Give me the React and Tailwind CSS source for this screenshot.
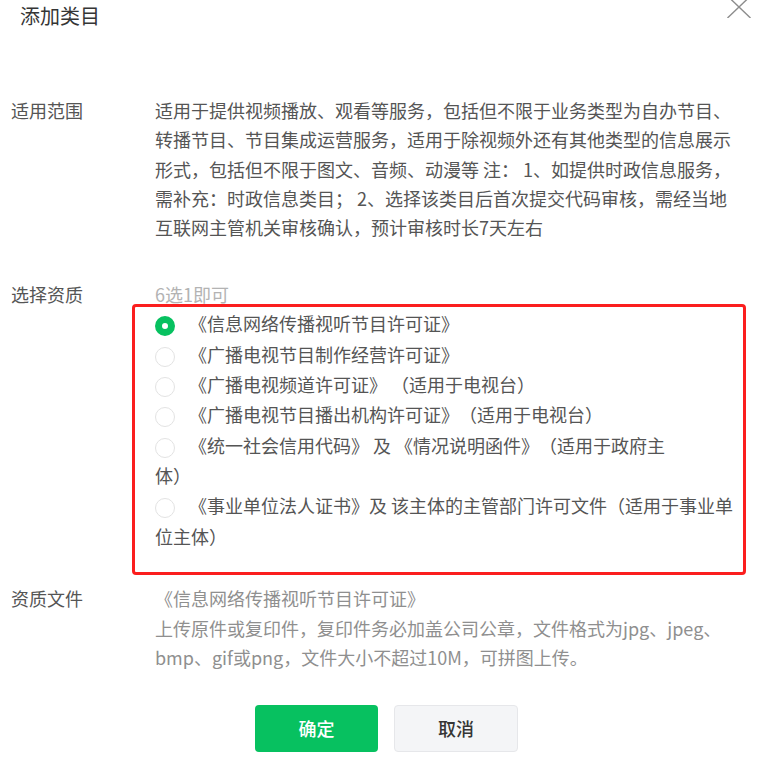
import React from "react";

const FONT = { fontFamily: '"Noto Sans CJK SC", "Noto Sans", sans-serif' };

function Radio({ checked }) {
  return checked ? (
    <span className="inline-block w-[20px] h-[20px] rounded-full border-[7px] border-[#07c160] bg-white align-[-5px] mr-[14px]" />
  ) : (
    <span className="inline-block w-[20px] h-[20px] rounded-full border border-[#e3e3e3] bg-white align-[-5px] mr-[14px]" />
  );
}

const desc = [
  "适用于提供视频播放、观看等服务，包括但不限于业务类型为自办节目、",
  "转播节目、节目集成运营服务，适用于除视频外还有其他类型的信息展示",
  "形式，包括但不限于图文、音频、动漫等 注： 1、如提供时政信息服务，",
  "需补充：时政信息类目； 2、选择该类目后首次提交代码审核，需经当地",
  "互联网主管机关审核确认，预计审核时长7天左右",
];

const options = [
  { lines: ["《信息网络传播视听节目许可证》"], checked: true },
  { lines: ["《广播电视节目制作经营许可证》"] },
  { lines: ["《广播电视频道许可证》 （适用于电视台）"] },
  { lines: ["《广播电视节目播出机构许可证》（适用于电视台）"] },
  { lines: ["《统一社会信用代码》 及 《情况说明函件》（适用于政府主", "体）"] },
  { lines: ["《事业单位法人证书》及 该主体的主管部门许可文件（适用于事业单", "位主体）"] },
];

export default function App() {
  return (
    <div style={FONT} className="relative w-[769px] h-[757px] bg-white overflow-hidden text-[#555555] [text-spacing-trim:space-all]">
      <svg className="absolute left-[727px] top-[-4px]" width="24" height="22" viewBox="0 0 24 22">
        <line x1="0.5" y1="0" x2="23.5" y2="22" stroke="#8c8c8c" strokeWidth="1.4" />
        <line x1="23.5" y1="0" x2="0.5" y2="22" stroke="#8c8c8c" strokeWidth="1.4" />
      </svg>

      <div className="h-[96px] pl-[20px] pt-[4px]">
        <div className="text-[20px] leading-[24px] text-[#353535]">添加类目</div>
      </div>

      <div className="grid grid-cols-[144px_1fr] pl-[11px] text-[18px] leading-[29.3px]">
        <div>适用范围</div>
        <div>
          {desc.map((l, i) => (
            <div key={i} className="whitespace-nowrap">{l}</div>
          ))}
        </div>
      </div>

      <div className="grid grid-cols-[144px_1fr] pl-[11px] mt-[42px] text-[18px]">
        <div className="leading-[20px]">选择资质</div>
        <div>
          <div className="leading-[20px] text-[#b3b3b3]">6选1即可</div>
          <div className="ml-[-23px] w-[614px] h-[271px] border-[3px] border-[#fb1e1e] rounded-[4px] pl-[20px] pt-[1px] leading-[30.3px]">
            {options.map((o, i) => (
              <div key={i}>
                <div className="whitespace-nowrap">
                  <Radio checked={o.checked} />
                  {o.lines[0]}
                </div>
                {o.lines.slice(1).map((l, j) => (
                  <div key={j} className="whitespace-nowrap">{l}</div>
                ))}
              </div>
            ))}
          </div>
        </div>
      </div>

      <div className="grid grid-cols-[144px_1fr] pl-[11px] mt-[9px] text-[18px] leading-[29.5px]">
        <div>资质文件</div>
        <div className="text-[#8f8f8f]">
          <div className="whitespace-nowrap">《信息网络传播视听节目许可证》</div>
          <div className="whitespace-nowrap">上传原件或复印件，复印件务必加盖公司公章，文件格式为jpg、jpeg、</div>
          <div className="whitespace-nowrap">bmp、gif或png，文件大小不超过10M，可拼图上传。</div>
        </div>
      </div>

      <div className="flex justify-center gap-[16px] pl-[4px] mt-[32px]">
        <button className="w-[123px] h-[47px] rounded-[4px] bg-[#07c160] text-white text-[18px] font-medium">确定</button>
        <button className="w-[124px] h-[47px] rounded-[4px] bg-[#f4f5f7] border border-[#e6e7ea] text-[#353535] text-[18px] font-medium">取消</button>
      </div>
    </div>
  );
}
